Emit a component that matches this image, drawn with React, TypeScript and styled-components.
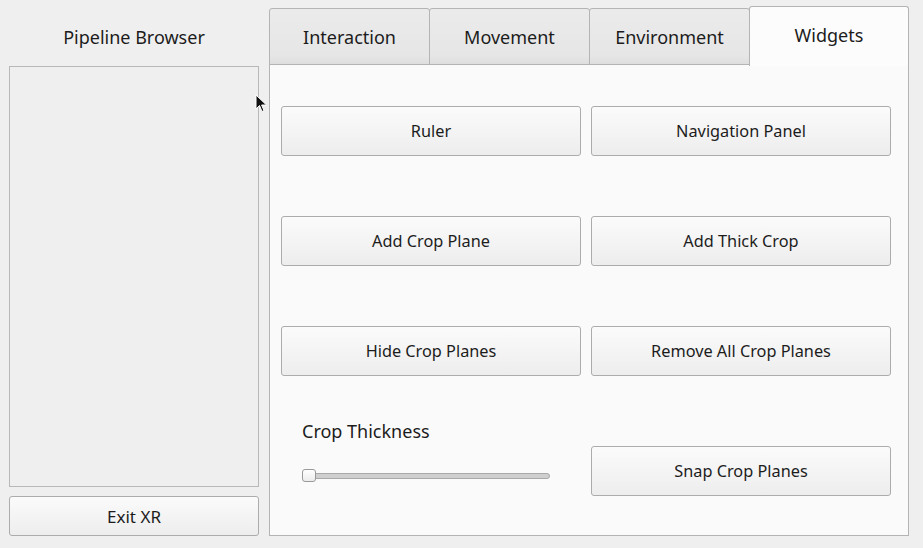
import React from "react";
import styled, { createGlobalStyle } from "styled-components";

const Global = createGlobalStyle`
  html, body { margin: 0; padding: 0; background: #efefef; }
  body { font-family: "Noto Sans", "Open Sans", sans-serif; color: #1c1c1c; }
  * { box-sizing: border-box; }
`;

const Window = styled.div`
  position: relative;
  width: 923px;
  height: 548px;
  display: flex;
  gap: 10px;
  padding: 0 14px 12px 9px;
  background: #efefef;
  overflow: hidden;
`;

const LeftColumn = styled.div`
  width: 250px;
  display: flex;
  flex-direction: column;
`;

const ColumnTitle = styled.div`
  height: 66px;
  display: flex;
  align-items: center;
  justify-content: center;
  padding-top: 7px;
  font-size: 18px;
`;

const PipelineList = styled.div`
  height: 421px;
  border: 1px solid #b8b8b8;
  background: #efefef;
`;

const PushButton = styled.button<{ $w?: number; $h?: number }>`
  width: ${(p) => (p.$w ? `${p.$w}px` : "100%")};
  height: ${(p) => (p.$h ? `${p.$h}px` : "50px")};
  border: 1px solid #acacac;
  border-radius: 3px;
  background: linear-gradient(#fbfbfb, #ededed);
  font-family: inherit;
  font-size: 16.3px;
  color: #1c1c1c;
  padding: 0;
  margin: 0;
`;

const ExitButton = styled(PushButton)`
  margin-top: 9px;
  font-size: 17px;
`;

const RightColumn = styled.div`
  width: 640px;
  display: flex;
  flex-direction: column;
  padding-top: 7px;
`;

const TabBar = styled.div`
  height: 58px;
  display: flex;
  align-items: flex-end;
`;

const Tab = styled.div<{ $active?: boolean }>`
  width: ${(p) => (p.$active ? "160px" : "161px")};
  height: ${(p) => (p.$active ? "60px" : "57px")};
  margin-left: -1px;
  margin-bottom: ${(p) => (p.$active ? "-1px" : "0")};
  &:first-child { margin-left: 0; }
  display: flex;
  align-items: center;
  justify-content: center;
  padding-bottom: ${(p) => (p.$active ? "3px" : "0")};
  border: 1px solid #b4b4b4;
  border-bottom: ${(p) => (p.$active ? "none" : "1px solid #b4b4b4")};
  border-radius: 3px 3px 0 0;
  background: ${(p) => (p.$active ? "#fcfcfc" : "linear-gradient(#ebebeb, #e6e6e6 85%, #dedede)")};
  font-size: 18px;
  position: relative;
  z-index: ${(p) => (p.$active ? 2 : 1)};
`;

const Pane = styled.div`
  flex: 1;
  margin-top: -1px;
  border: 1px solid #b4b4b4;
  background: #fafafa;
  padding: 0 17px 0 11px;
  display: flex;
  flex-direction: column;
`;

const Row = styled.div<{ $top: number }>`
  margin-top: ${(p) => p.$top}px;
  display: flex;
  gap: 10px;
  align-items: flex-end;
`;

const SliderCell = styled.div`
  width: 300px;
  display: flex;
  flex-direction: column;
  padding: 0 0 14px 21px;
  gap: 26px;
`;

const FieldLabel = styled.div`
  font-size: 18px;
  line-height: 24px;
`;

const Slider = styled.div`
  position: relative;
  width: 248px;
  height: 13px;
  display: flex;
  align-items: center;
`;

const Groove = styled.div`
  width: 100%;
  height: 6px;
  border: 1px solid #a9a9a9;
  border-radius: 3px;
  background: #cfcfcf;
`;

const Handle = styled.div`
  position: absolute;
  left: 0;
  top: 0;
  width: 14px;
  height: 13px;
  border: 1px solid #9a9a9a;
  border-radius: 3px;
  background: linear-gradient(#ffffff, #ececec);
`;

const Cursor = styled.svg`
  position: absolute;
  left: 255px;
  top: 94px;
`;

export default function App() {
  return (
    <>
      <Global />
      <Window>
        <LeftColumn>
          <ColumnTitle>Pipeline Browser</ColumnTitle>
          <PipelineList />
          <ExitButton $h={40}>Exit XR</ExitButton>
        </LeftColumn>
        <RightColumn>
          <TabBar>
            <Tab>Interaction</Tab>
            <Tab>Movement</Tab>
            <Tab>Environment</Tab>
            <Tab $active>Widgets</Tab>
          </TabBar>
          <Pane>
            <Row $top={41}>
              <PushButton $w={300}>Ruler</PushButton>
              <PushButton $w={300}>Navigation Panel</PushButton>
            </Row>
            <Row $top={60}>
              <PushButton $w={300}>Add Crop Plane</PushButton>
              <PushButton $w={300}>Add Thick Crop</PushButton>
            </Row>
            <Row $top={60}>
              <PushButton $w={300}>Hide Crop Planes</PushButton>
              <PushButton $w={300}>Remove All Crop Planes</PushButton>
            </Row>
            <Row $top={43}>
              <SliderCell>
                <FieldLabel>Crop Thickness</FieldLabel>
                <Slider>
                  <Groove />
                  <Handle />
                </Slider>
              </SliderCell>
              <PushButton $w={300}>Snap Crop Planes</PushButton>
            </Row>
          </Pane>
        </RightColumn>
        <Cursor width="13" height="19" viewBox="0 0 13 19">
          <path d="M1 1 L1 15 L4.5 11.5 L7 17.5 L9 16.6 L6.6 11 L11.5 11 Z" fill="#111" stroke="#fff" strokeWidth="1" strokeLinejoin="round" />
        </Cursor>
      </Window>
    </>
  );
}
